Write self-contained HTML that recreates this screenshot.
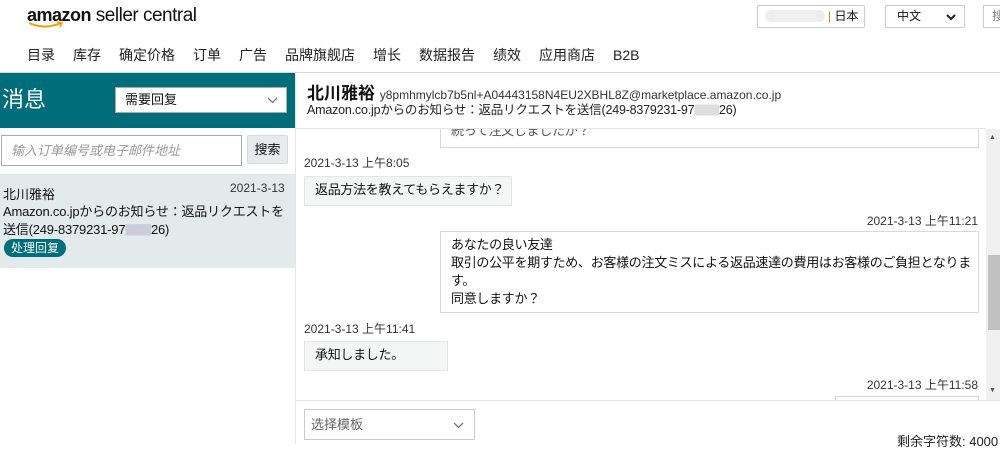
<!DOCTYPE html>
<html><head><meta charset="utf-8"><style>
*{margin:0;padding:0;box-sizing:border-box}
body{width:1000px;height:444px;overflow:hidden;background:#fff;font-family:"Liberation Sans","Noto Sans CJK SC",sans-serif;color:#111;position:relative;font-size:13px}
.a{position:absolute;white-space:nowrap}
.jp{font-family:"Liberation Sans","Noto Sans CJK JP",sans-serif}
.nav span{margin-right:18px}
.bub{position:absolute;font-size:13px;line-height:18px;padding:4px 10px;white-space:nowrap;font-family:"Liberation Sans","Noto Sans CJK JP",sans-serif;letter-spacing:-0.3px}
.l{background:#f4f6f6;border:1px solid #e3e6e6}
.r{background:#fff;border:1px solid #d5d9d9}
.ts{position:absolute;font-size:12px;color:#333;white-space:nowrap}
#chat{position:absolute;left:296px;top:129px;width:690px;height:271px;overflow:hidden}
#chat>*{margin-left:-296px;margin-top:-129px}
</style></head><body>
<div class="a" style="left:27px;top:3px;font-size:19px;letter-spacing:-0.5px;line-height:24px"><b style="font-size:18px">amazon</b> seller central</div>
<svg class="a" style="left:28px;top:21px" width="36" height="8"><path d="M1 2 Q17 9 33 2" stroke="#f90" stroke-width="2" fill="none"/><path d="M29 1 L34 2 L32 6" stroke="#f90" stroke-width="1.5" fill="none"/></svg>
<div class="a" style="left:757px;top:5px;width:108px;height:23px;border:1px solid #ccc;border-radius:2px;font-size:12px;line-height:21px;padding-left:70px"><span style="color:#c80">|</span> 日本</div>
<div class="a" style="left:765px;top:10px;width:60px;height:12px;background:#eee;border-radius:6px"></div>
<div class="a" style="left:885px;top:5px;width:80px;height:23px;border:1px solid #ccc;border-radius:2px;font-size:12px;line-height:21px;padding-left:11px">中文<svg style="position:absolute;right:8px;top:8px" width="10" height="7"><path d="M1 1 L5 5 L9 1" stroke="#222" fill="none" stroke-width="2"/></svg></div>
<div class="a" style="left:983px;top:5px;width:30px;height:23px;border:1px solid #ccc;font-size:12px;line-height:21px;padding-left:8px;color:#888">搜</div>
<div class="a nav" style="left:27px;top:45px;font-size:14px;color:#222"><span>目录</span><span>库存</span><span>确定价格</span><span>订单</span><span>广告</span><span>品牌旗舰店</span><span>增长</span><span>数据报告</span><span>绩效</span><span>应用商店</span><span>B2B</span></div>
<div class="a" style="left:0;top:72px;width:1000px;height:1px;background:#d5d9d9"></div>
<div class="a" style="left:0;top:73px;width:295px;height:55px;background:#006e7a"></div>
<div class="a" style="left:2px;top:86px;color:#fff;font-size:22px;line-height:28px">消息</div>
<div class="a" style="left:115px;top:87px;width:172px;height:26px;background:#fff;border:1px solid #aaa;font-size:13px;line-height:24px;padding-left:9px">需要回复<svg style="position:absolute;right:8px;top:9px" width="11" height="7"><path d="M1 1 L5.5 5.5 L10 1" stroke="#777" fill="none" stroke-width="1.3"/></svg></div>
<div class="a" style="left:295px;top:73px;width:1px;height:371px;background:#e3e6e6"></div>
<div class="a" style="left:307px;top:83px;font-size:17px;font-weight:bold;line-height:22px">北川雅裕 <span style="font-size:12px;font-weight:normal;color:#333">y8pmhmylcb7b5nl+A04443158N4EU2XBHL8Z@marketplace.amazon.co.jp</span></div>
<div class="a jp" style="left:307px;top:102px;font-size:12.5px;line-height:17px;color:#222;letter-spacing:-0.2px">Amazon.co.jpからのお知らせ：返品リクエストを送信(249-8379231-97<span style="color:#ddd">▇▇</span>26)</div>
<div class="a" style="left:1px;top:135px;width:241px;height:31px;border:1px solid #aaa;font-size:13px;line-height:29px;padding-left:9px;color:#999;font-style:italic">输入订单编号或电子邮件地址</div>
<div class="a" style="left:247px;top:135px;width:41px;height:29px;background:#e7eaea;border:1px solid #d5d9d9;border-radius:2px;font-size:13px;line-height:27px;text-align:center">搜索</div>
<div class="a" style="left:0;top:174px;width:295px;height:1px;background:#e3e6e6"></div>
<div class="a" style="left:0;top:175px;width:295px;height:93px;background:#e2eaeb"></div>
<div class="a" style="left:3px;top:184px;font-size:13px">北川雅裕</div>
<div class="a" style="left:230px;top:181px;font-size:12px;color:#333">2021-3-13</div>
<div class="a jp" style="left:3px;top:203px;font-size:13px;line-height:18px;letter-spacing:-0.2px">Amazon.co.jpからのお知らせ：返品リクエストを<br>送信(249-8379231-97<span style="color:#ccd">▇▇</span>26)</div>
<div class="a" style="left:4px;top:239px;height:18px;padding:0 7px;background:#006e7a;color:#fff;border-radius:9px;font-size:12px;line-height:18px">处理回复</div>
<div id="chat"><div style="position:relative;width:1000px;height:444px">
<div class="bub r" style="left:440px;top:114px;width:539px;height:34px;padding-top:7px;color:#555">続って注文しましたか？</div>
<div class="ts" style="left:304px;top:154px">2021-3-13 上午8:05</div>
<div class="bub l" style="left:304px;top:176px;width:208px;height:30px">返品方法を教えてもらえますか？</div>
<div class="ts" style="right:22px;top:212px">2021-3-13 上午11:21</div>
<div class="bub r" style="left:440px;top:231px;width:539px;height:82px">あなたの良い友達<br>取引の公平を期すため、お客様の注文ミスによる返品速達の費用はお客様のご負担となりま<br>す。<br>同意しますか？</div>
<div class="ts" style="left:304px;top:320px">2021-3-13 上午11:41</div>
<div class="bub l" style="left:304px;top:341px;width:144px;height:30px">承知しました。</div>
<div class="ts" style="right:22px;top:376px">2021-3-13 上午11:58</div>
<div class="a" style="left:835px;top:396px;width:144px;height:10px;border:1px solid #d5d9d9;border-bottom:none"></div>
</div></div>
<div class="a" style="left:296px;top:128px;width:690px;height:1px;background:#e3e6e6"></div>
<div class="a" style="left:986px;top:129px;width:14px;height:271px;background:#f0f0f0"></div>
<div class="a" style="left:989px;top:134px;font-size:7px;color:#555">▲</div>
<div class="a" style="left:989px;top:387px;font-size:7px;color:#555">▼</div>
<div class="a" style="left:988px;top:255px;width:12px;height:75px;background:#c1c1c1"></div>
<div class="a" style="left:296px;top:400px;width:704px;height:1px;background:#e3e6e6"></div>
<div class="a" style="left:304px;top:409px;width:171px;height:31px;border:1px solid #ccc;font-size:13px;line-height:29px;padding-left:6px;color:#666">选择模板<svg style="position:absolute;right:10px;top:12px" width="11" height="7"><path d="M1 1 L5.5 5.5 L10 1" stroke="#777" fill="none" stroke-width="1.3"/></svg></div>
<div class="a" style="left:897px;top:431px;font-size:13px;color:#222">剩余字符数: 4000</div>
</body></html>
